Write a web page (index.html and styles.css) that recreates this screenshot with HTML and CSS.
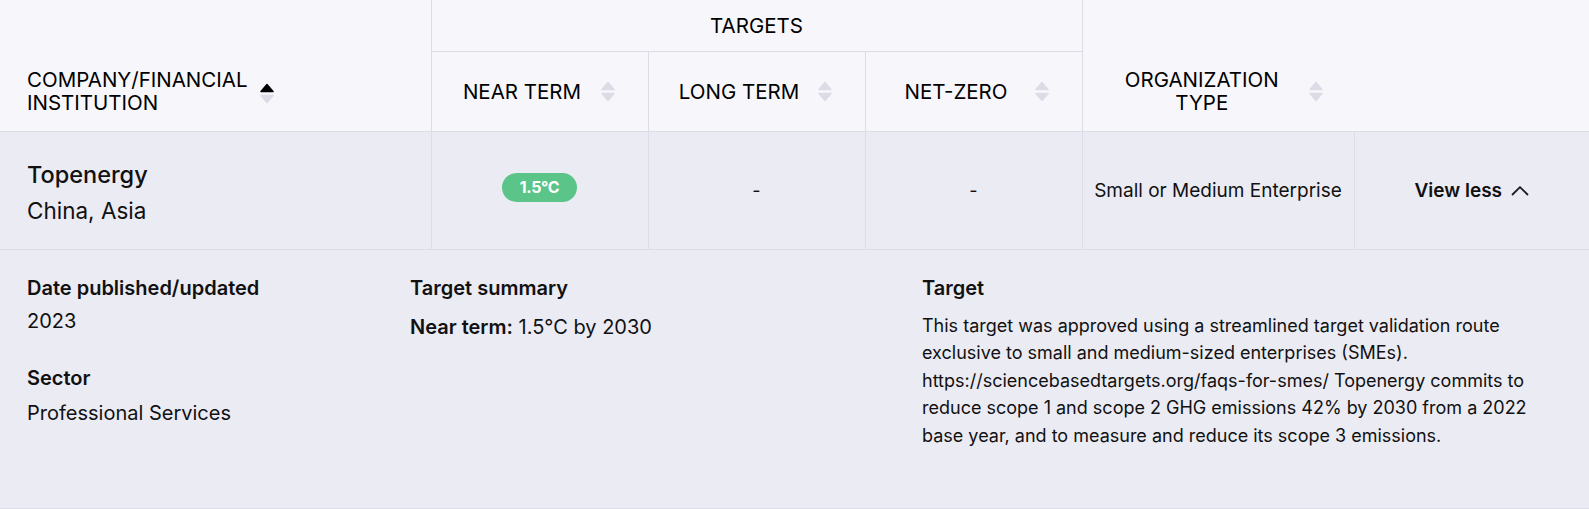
FILE: index.html
```html
<!DOCTYPE html>
<html lang="en">
<head>
  <meta charset="UTF-8">
  <title>Target dashboard</title>
  <meta name="viewport" content="width=device-width, initial-scale=1">
  <link rel="stylesheet" href="styles.css">
</head>
<body>
  <table class="targets">
    <colgroup>
      <col class="c-name">
      <col class="c-term">
      <col class="c-term">
      <col class="c-term">
      <col class="c-org">
      <col class="c-more">
    </colgroup>
    <thead>
      <tr class="head-top">
        <th rowspan="2" class="th-name">
          <div class="sort sort-left">
            <span class="label">Company/Financial<br>Institution</span>
            <svg class="sort-icon" viewBox="0 0 14 21" width="14" height="21">
              <path class="up active" d="M7 1.5 L13 8.5 H1 Z"/>
              <path class="down" d="M1 12.5 H13 L7 19.5 Z"/>
            </svg>
          </div>
        </th>
        <th colspan="3" class="th-group">Targets</th>
        <th rowspan="2" class="th-org">
          <div class="sort">
            <span class="label">Organization<br>Type</span>
            <svg class="sort-icon" viewBox="0 0 14 21" width="14" height="21">
              <path class="up" d="M7 1.5 L13 8.5 H1 Z"/>
              <path class="down" d="M1 12.5 H13 L7 19.5 Z"/>
            </svg>
          </div>
        </th>
        <th rowspan="2" class="th-blank"></th>
      </tr>
      <tr class="head-sub">
        <th class="th-term">
          <div class="sort">
            <span class="label">Near term</span>
            <svg class="sort-icon" viewBox="0 0 14 21" width="14" height="21">
              <path class="up" d="M7 1.5 L13 8.5 H1 Z"/>
              <path class="down" d="M1 12.5 H13 L7 19.5 Z"/>
            </svg>
          </div>
        </th>
        <th class="th-term">
          <div class="sort">
            <span class="label">Long term</span>
            <svg class="sort-icon" viewBox="0 0 14 21" width="14" height="21">
              <path class="up" d="M7 1.5 L13 8.5 H1 Z"/>
              <path class="down" d="M1 12.5 H13 L7 19.5 Z"/>
            </svg>
          </div>
        </th>
        <th class="th-term">
          <div class="sort">
            <span class="label">Net-zero</span>
            <svg class="sort-icon" viewBox="0 0 14 21" width="14" height="21">
              <path class="up" d="M7 1.5 L13 8.5 H1 Z"/>
              <path class="down" d="M1 12.5 H13 L7 19.5 Z"/>
            </svg>
          </div>
        </th>
      </tr>
    </thead>
    <tbody>
      <tr class="company-row">
        <td class="td-name">
          <div class="name">Topenergy</div>
          <div class="place">China, Asia</div>
        </td>
        <td class="td-center"><span class="badge">1.5°C</span></td>
        <td class="td-center">-</td>
        <td class="td-center">-</td>
        <td class="td-center td-org">Small or Medium Enterprise</td>
        <td class="td-center td-more">
          <button class="toggle" type="button">View less
            <svg viewBox="0 0 18 10" width="18" height="10"><polyline points="1,9 9,1.2 17,9"/></svg>
          </button>
        </td>
      </tr>
      <tr class="detail-row">
        <td colspan="6">
          <div class="detail">
            <div class="detail-col">
              <h4>Date published/updated</h4>
              <p class="value">2023</p>
              <h4 class="next">Sector</h4>
              <p class="value value-last">Professional Services</p>
            </div>
            <div class="detail-col">
              <h4>Target summary</h4>
              <p class="summary"><strong>Near term:</strong> 1.5°C by 2030</p>
            </div>
            <div class="detail-col">
              <h4>Target</h4>
              <p class="text">This target was approved using a streamlined target validation route exclusive to small and medium-sized enterprises (SMEs). https://sciencebasedtargets.org/faqs-for-smes/ Topenergy commits to reduce scope 1 and scope 2 GHG emissions 42% by 2030 from a 2022 base year, and to measure and reduce its scope 3 emissions.</p>
            </div>
          </div>
        </td>
      </tr>
    </tbody>
  </table>
</body>
</html>
```

FILE: styles.css
```css
body {
  margin: 0;
  background: #fff;
  color: #111;
  font-family: Inter, "Liberation Sans", sans-serif;
}

.targets {
  width: 100%;
  border-collapse: collapse;
  table-layout: fixed;
}
.c-name { width: 431px; }
.c-term { width: 217px; }
.c-org { width: 272px; }
.c-more { width: 235px; }

th, td {
  padding: 0;
  border: 0;
}

/* header */
thead th {
  background: #f7f7fb;
  font-weight: 400;
  font-size: 20.5px;
  line-height: 23px;
  text-transform: uppercase;
  color: #000;
  border-bottom: 1px solid #dddde7;
}
.head-top th.th-group { height: 51px; }
.head-sub th { height: 79px; }
.th-name, .th-group, .th-term { border-right: 1px solid #dddde7; }

/* two-line labels sit level with the sub row */
thead th.th-name,
thead th.th-org {
  vertical-align: bottom;
  padding-bottom: 17px;
}

.sort {
  display: flex;
  align-items: center;
}
.sort .label {
  flex: 1;
  text-align: center;
}
.th-term .sort { padding: 0 33px 0 16px; }
.th-org .sort { padding: 0 31px 0 16px; }
.sort .sort-icon { margin-left: 4px; flex: none; }

.sort-left { padding-left: 27px; gap: 12px; }
.sort-left .label { flex: none; text-align: left; }
.sort-left .sort-icon { margin: 5px 0 0; }

.sort-icon path {
  fill: #dcdce6;
  stroke: #dcdce6;
  stroke-width: 1.5;
  stroke-linejoin: round;
}
.sort-icon path.active {
  fill: #000;
  stroke: #000;
}

/* company row */
tbody td {
  background: #ebebf4;
  border-bottom: 1px solid #dddde7;
}
.company-row td {
  height: 117px;
  border-right: 1px solid #dddde7;
}
.company-row td.td-more { border-right: 0; }
.td-name { padding-left: 27px !important; }
.name {
  padding-top: 4px;
  font-size: 23.5px;
  font-weight: 500;
  line-height: 32px;
}
.place {
  font-size: 22.5px;
  line-height: 32px;
  margin-top: 4px;
}
.td-center {
  text-align: center;
  font-size: 18px;
}
.td-org { font-size: 19px; }

.badge {
  display: inline-block;
  position: relative;
  top: -3px;
  width: 75px;
  height: 29px;
  line-height: 29px;
  border-radius: 15px;
  background: #5bc589;
  color: #fff;
  font-size: 16px;
  font-weight: 700;
  letter-spacing: -0.3px;
}

.toggle {
  border: 0;
  background: none;
  padding: 0;
  font: inherit;
  font-size: 19px;
  font-weight: 600;
  color: #111;
  display: inline-flex;
  align-items: center;
  gap: 9px;
  cursor: pointer;
}
.toggle svg {
  fill: none;
  stroke: #1a1a24;
  stroke-width: 1.8;
}

/* expanded details */
.detail-row td { height: 258px; vertical-align: top; }
.detail {
  display: grid;
  grid-template-columns: 383px 512px 1fr;
  padding: 25px 27px 0;
}
.detail h4 {
  margin: 0;
  font-size: 20px;
  font-weight: 600;
  line-height: 27px;
}
.detail h4.next { margin-top: 30px; }
.detail p {
  margin: 6px 0 0;
  font-size: 20px;
  line-height: 27px;
}
.detail p.value-last { margin-top: 8px; }
.detail p.summary { margin-top: 12px; }
.detail p.summary strong { font-weight: 600; }
.detail p.text {
  margin-top: 10px;
  font-size: 18px;
  line-height: 27.4px;
}
```
